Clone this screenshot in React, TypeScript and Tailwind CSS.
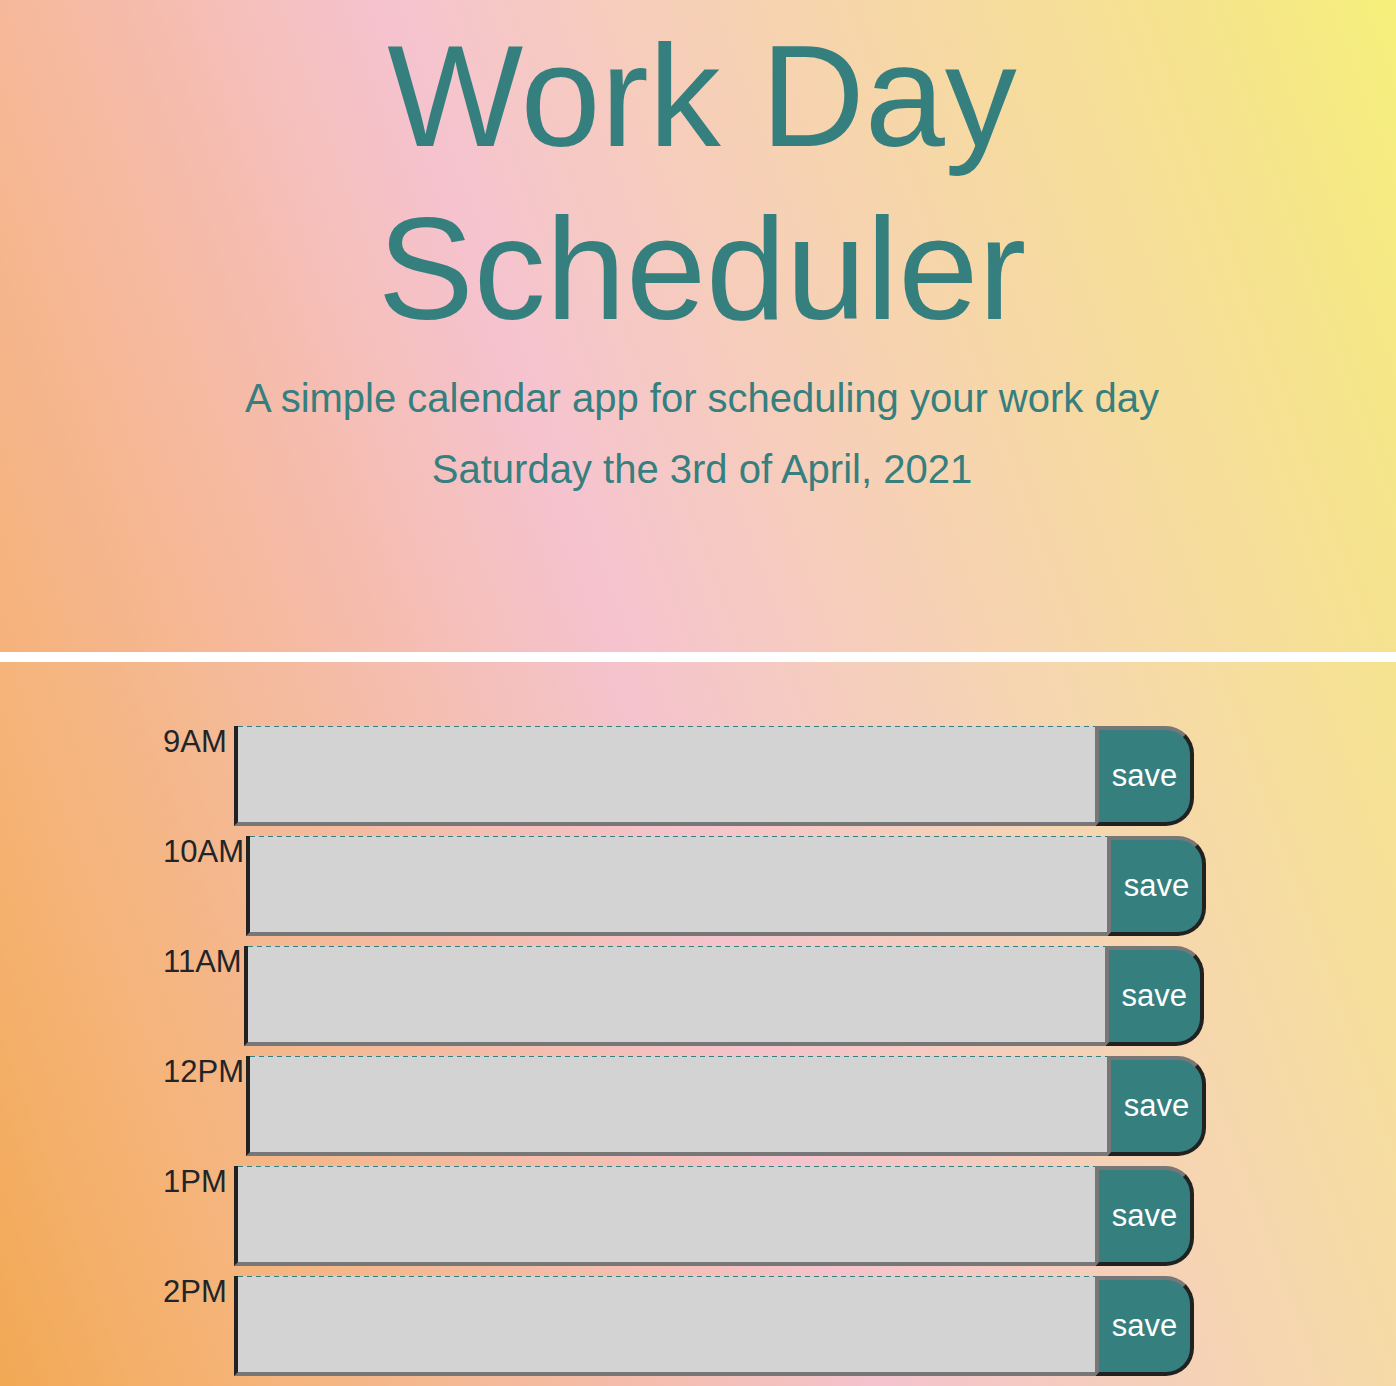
import React from "react";

const hours = ["9AM", "10AM", "11AM", "12PM", "1PM", "2PM"];

export default function App() {
  return (
    <div className="h-[1386px] overflow-hidden font-['Liberation_Sans',Arial,sans-serif]">
      <header className="h-[662px] border-b-[10px] border-white bg-[linear-gradient(70deg,#f5b27a_0%,#f6b898_14%,#f5c3cf_38%,#f7d2b2_60%,#f5e290_85%,#f6ef7b_100%)] pt-[11px] pl-2 text-center text-[#367f7f]">
        <h1 className="text-[144px] leading-[1.2]">
          Work Day
          <br />
          Scheduler
        </h1>
        <p className="mt-[11px] text-[40px] leading-[60px]">
          A simple calendar app for scheduling your work day
        </p>
        <p className="mt-[11px] text-[40px] leading-[60px]">Saturday the 3rd of April, 2021</p>
      </header>
      <main className="h-[724px] overflow-hidden bg-[linear-gradient(70deg,#f2a955_0%,#f5b47a_16%,#f4c3cd_53%,#f6d6b0_78%,#f5e38f_100%)] pt-[64px] pl-[163px]">
        {hours.map((h) => (
          <div key={h} className="mb-[10px] flex h-[100px] items-start">
            <div className="min-w-[71px] pr-[2px] pt-[2px] text-[31px] leading-[27px] text-[#212529]">{h}</div>
            <textarea
              className="h-[100px] w-[861px] resize-none border-b-4 border-l-4 border-b-[#777777] border-l-[#212121] bg-[#d3d3d3] bg-[image:repeating-linear-gradient(90deg,#367f7f_0_5px,transparent_5px_9px)] bg-[length:100%_1px] bg-no-repeat p-2 outline-none"
            />
            <button className="flex h-[100px] w-[99px] items-center justify-center rounded-r-[28px] border-4 border-t-[#777777] border-l-[#777777] border-r-[#212121] border-b-[#212121] bg-[#367f7f] text-[31px] text-white">
              save
            </button>
          </div>
        ))}
      </main>
    </div>
  );
}
